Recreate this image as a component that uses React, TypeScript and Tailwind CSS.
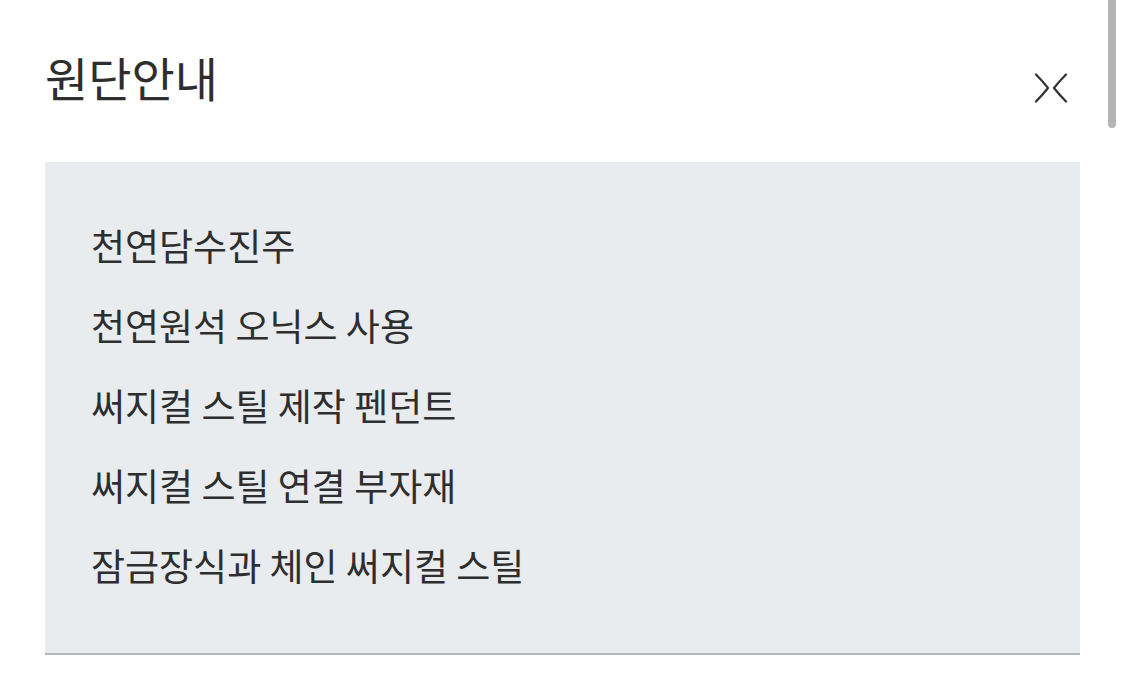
const items = [
  "천연담수진주",
  "천연원석 오닉스 사용",
  "써지컬 스틸 제작 펜던트",
  "써지컬 스틸 연결 부자재",
  "잠금장식과 체인 써지컬 스틸",
];

function CloseIcon() {
  return (
    <svg width="34" height="30" viewBox="0 0 34 30" fill="none" className="mt-[73px] mr-[12px]">
      <path d="M2 1.5 Q8 7.5 14 15 Q8 22.5 2 28.5" stroke="#333" strokeWidth="2.2" strokeLinecap="round" strokeLinejoin="round" />
      <path d="M32 1.5 Q26 7.5 20 15 Q26 22.5 32 28.5" stroke="#333" strokeWidth="2.2" strokeLinecap="round" strokeLinejoin="round" />
    </svg>
  );
}

export default function App() {
  return (
    <div
      className="relative w-[1125px] h-[679px] bg-white overflow-hidden text-[#2e2e2e]"
      style={{ fontFamily: '"Noto Sans CJK KR", "Noto Sans", sans-serif' }}
    >
      <div className="absolute right-[9px] top-0 w-2 h-[128px] rounded-b-full bg-[#b5b5b5]" />

      <div className="flex items-start justify-between h-[162px] px-[45px]">
        <h1 className="mt-[53px] text-[47px] leading-[48px] font-normal">원단안내</h1>
        <CloseIcon />
      </div>

      <div className="mx-[45px] bg-[#e8ecef] border-b-2 border-[#b4b8bb] pt-[43px] pb-[48px] pl-[46px]">
        <ul>
          {items.map((item) => (
            <li key={item} className="text-[37px] leading-[80px]">
              {item}
            </li>
          ))}
        </ul>
      </div>
    </div>
  );
}
